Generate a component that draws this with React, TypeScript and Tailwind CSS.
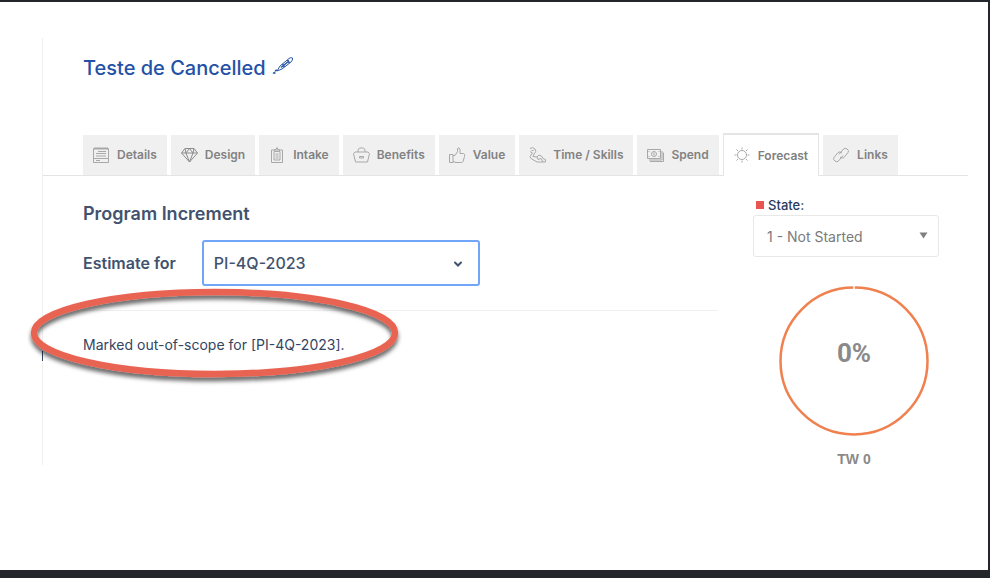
import React, { useState } from 'react';

// --- Icons ---
const icons: Record<string, React.ReactNode> = {
  details: (
    <>
      <path d="M.5 1.5h15v14H.5z" />
      <path d="M1 1.5h14" strokeWidth="2" />
      <path d="M5 4.5h8M3 6.5h10M3 9h10M1 11.5h14M3 13.5h4" />
    </>
  ),
  design: <path d="M4 1.5h9l3.5 4.5-8 9-8-9zM.5 6h16M5 6l3.5 9L12 6M4 1.5L5 6l3.5-4.5L12 6l1-4.5" stroke="#8c8c8c" />,
  intake: (
    <>
      <path d="M2.5 3h11v12.5h-11z" />
      <path d="M5.5 2.5h1.5l1-2 1 2h1.500v2h-5zM5 4.500v8.500h6V4.500M6.500 7h3M6.500 9h3M6.500 11h3" />
    </>
  ),
  benefits: (
    <path d="M5 5V3l1.500-2h4L12 3v2M2 5h13l1.500 1.500L14.500 15h-12L.5 6.500zM6.500 9.500h4v1.500h-4z" />
  ),
  value: (
    <path d="M.5 7.500h3.500v8H.5zM4 8.500h2l2.500-4V1.500q1.500-1.500 2.500.5v4.500h3.500q2 .5 1 3l-1.500 5q-.5 1-1.500 1H7l-3-1" />
  ),
  time: (
    <path d="M1 1.500q3-2 5 .5t-1 5L4 9.500l4 .5 2-2 3 1.500 1 2 2.500 1v2.500H8L2 11.500l-1-2L3.500 6 1 4.500M8 10l1 2.500 3-1 2 3.500M2.500 3.500h2" />
  ),
  spend: (
    <>
      <path d="M.5 2.500h13v9H.5zM3 14.500h13.500v-9M2 13h13V4" />
      <circle cx="7" cy="7" r="2.500" />
      <path d="M7 5.500v3M2 4v1M12 4v1M2 9v1M12 9v1" />
    </>
  ),
  forecast: (
    <>
      <circle cx="8" cy="8" r="4.500" />
      <path d="M8 .5v2M8 13.500v2M.5 8h2M13.500 8h2M2.500 2.500l1.500 1.500M12 12l1.500 1.500M13.500 2.500L12 4M4 12l-1.500 1.500" />
    </>
  ),
  links: (
    <>
      <path d="M6 7.500l4.500-5.500q1.500-1.500 3.500 0 2.500 1.500 1 3.500l-4 5q-2 1.500-4-.5" />
      <path d="M10 8.500L5.500 14q-1.500 1.500-3.500 0-2.500-1.500-1-3.500l4-5q2-1.500 4 .5" />
    </>
  ),
};

const tabs = [
  { id: 'details', label: 'Details' },
  { id: 'design', label: 'Design' },
  { id: 'intake', label: 'Intake' },
  { id: 'benefits', label: 'Benefits' },
  { id: 'value', label: 'Value' },
  { id: 'time', label: 'Time / Skills' },
  { id: 'spend', label: 'Spend' },
  { id: 'forecast', label: 'Forecast' },
  { id: 'links', label: 'Links' },
];

const App: React.FC = () => {
  const [activeTab, setActiveTab] = useState('forecast');

  return (
    <div className="flex min-h-screen flex-col border-t-2 border-r-2 border-b-8 border-[#23272b] bg-white font-['Inter',sans-serif]">
      <main className="mt-9 mr-5 ml-[42px] border-l border-[#f0f0f0]">
        {/* Title */}
        <header className="flex items-center gap-1.5 pt-4 pl-10">
          <h1 className="text-[20px] leading-7 font-medium text-[#2451a6]">Teste de Cancelled</h1>
          <button aria-label="Edit title" className="mb-1.5">
            <svg width="22" height="20" viewBox="0 0 22 20" fill="none" stroke="#2d5aa8" strokeWidth="1">
              <path d="M8 11L17 3.500q2-1.500 3.500-.5.500 2-1.500 4L10 14l-5 2z" />
              <path d="M9 12.500l8-6.500M10.500 9l2 3M15.500 5l2 3" strokeWidth="1.500" />
              <path d="M1 18.500l2-1.500M3 16l2-1M1.500 18h2" strokeWidth="1.500" />
            </svg>
          </button>
        </header>

        {/* Tabs */}
        <nav className="mt-[51px] flex items-end gap-1 border-b border-[#e4e4e4] pl-10">
          {tabs.map((tab) => (
            <button
              key={tab.id}
              onClick={() => setActiveTab(tab.id)}
              className={
                activeTab === tab.id
                  ? '-mb-px flex h-[43px] items-center gap-[7px] border-x border-t-2 border-[#e4e4e4] bg-white px-2.5 text-[12px] font-semibold whitespace-nowrap text-[#808080]'
                  : 'flex h-10 items-center gap-[7px] bg-[#f0f0f0] px-2.5 text-[12px] font-semibold whitespace-nowrap text-[#828282]'
              }
            >
              <svg width="17" height="17" viewBox="0 0 17 17" fill="none" stroke="#a8a8a8" strokeWidth="1" aria-hidden="true">
                {icons[tab.id]}
              </svg>
              {tab.label}
            </button>
          ))}
        </nav>

        <div className="flex gap-[35px] pr-[29px] pl-10">
          {/* Program increment */}
          <section className="flex-1 pt-6 text-[#42526e]">
            <h2 className="text-[18px] leading-7 font-semibold">Program Increment</h2>
            <div className="mt-3 flex items-center gap-[26px]">
              <label htmlFor="increment" className="text-[16px] font-semibold">Estimate for</label>
              <div className="relative w-[278px]">
                <select
                  id="increment"
                  className="h-[46px] w-full appearance-none rounded-[3px] border-2 border-[#70a5f8] bg-white px-2.5 text-[16px] font-medium text-[#42526e] outline-none"
                >
                  <option>PI-4Q-2023</option>
                </select>
                <svg className="pointer-events-none absolute top-5 right-4" width="12" height="8" viewBox="0 0 12 8" fill="none" stroke="#42526e" strokeWidth="2" strokeLinecap="round">
                  <path d="M3 2.500l3 3 3-3" />
                </svg>
              </div>
            </div>

            <div className="relative mt-6 border-t border-[#f0f0f0] pt-6">
              <p className="text-[14px] leading-5 text-[#344563]">Marked out-of-scope for [PI-4Q-2023].</p>
              <span className="absolute top-10 -left-[41px] h-2.5 w-px bg-[#344563]" />
              {/* Highlight around the message */}
              <svg className="pointer-events-none absolute -top-7 -left-[56px]" width="380" height="104" viewBox="0 0 380 104" fill="none" aria-hidden="true">
                <defs>
                  <filter id="shade" x="-5%" y="-10%" width="110%" height="130%">
                    <feDropShadow dx="0" dy="4" stdDeviation="2" floodColor="#000" floodOpacity="0.6" />
                  </filter>
                </defs>
                <ellipse cx="187.500" cy="50" rx="180.500" ry="41" stroke="#e96453" strokeWidth="6.500" filter="url(#shade)" />
              </svg>
            </div>
          </section>

          {/* State and progress */}
          <aside className="w-[186px] pt-[19px]">
            <label htmlFor="state" className="flex items-center gap-1 pl-[3px] text-[13px] leading-5 font-medium text-[#2b3b5e]">
              <span className="h-2 w-2 bg-[#e8564f]" />
              State:
            </label>
            <div className="relative">
              <select
                id="state"
                className="h-[42px] w-full appearance-none rounded-[3px] border border-[#e8e8e8] bg-white px-[13px] text-[14px] text-[#7a7a7a] outline-none"
              >
                <option>1 - Not Started</option>
              </select>
              <svg className="pointer-events-none absolute top-[17px] right-[11px]" width="9" height="7" viewBox="0 0 9 7" fill="#808080">
                <path d="M.5.500h8l-4 6z" />
              </svg>
            </div>
            <div className="mt-7 flex flex-col items-center pl-4">
              <div className="relative flex h-[152px] w-[152px] items-center justify-center pb-4">
                <svg className="absolute inset-0" width="152" height="152" viewBox="0 0 152 152" fill="none">
                  <circle cx="76" cy="76" r="73.500" stroke="#f0814f" strokeWidth="2.500" />
                  <path d="M76 0v5" stroke="#fff" strokeWidth="1.500" />
                </svg>
                <span className="relative font-['Roboto',sans-serif] text-[26px] font-bold text-[#8a8a8a]">0%</span>
              </div>
              <span className="mt-4 font-['Liberation_Sans',sans-serif] text-[14px] leading-3 font-bold text-[#8a8a8a]">TW 0</span>
            </div>
          </aside>
        </div>
      </main>
    </div>
  );
};

export default App;
